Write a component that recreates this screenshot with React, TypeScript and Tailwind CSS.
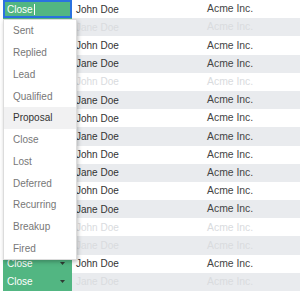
import React from "react";

const rows = [
  { name: "John Doe", faded: false },
  { name: "Jane Doe", faded: true },
  { name: "John Doe", faded: false },
  { name: "Jane Doe", faded: false },
  { name: "John Doe", faded: true },
  { name: "Jane Doe", faded: false },
  { name: "John Doe", faded: false },
  { name: "Jane Doe", faded: false },
  { name: "John Doe", faded: false },
  { name: "Jane Doe", faded: false },
  { name: "John Doe", faded: false },
  { name: "Jane Doe", faded: false },
  { name: "John Doe", faded: true },
  { name: "Jane Doe", faded: true },
  { name: "John Doe", faded: false },
  { name: "Jane Doe", faded: true },
];

const options = [
  "Sent",
  "Replied",
  "Lead",
  "Qualified",
  "Proposal",
  "Close",
  "Lost",
  "Deferred",
  "Recurring",
  "Breakup",
  "Fired",
];

export default function App() {
  return (
    <div className="relative w-[300px] h-[294px] bg-white font-['Liberation_Sans',Arial,sans-serif] text-[10px] overflow-hidden">
      <div className="flex flex-col">
        {rows.map((r, i) => (
          <div key={i} className="flex h-[18.2px] items-stretch">
            <div className="w-[3px] bg-white" />
            <div
              className={`flex flex-1 items-center ${i % 2 === 1 ? "bg-[#e9ebee]" : "bg-white"}`}
            >
              <div className="w-[69px] h-full bg-[#52b682] text-white flex items-center justify-between pl-[4px] pr-[7px]">
                <span>Close</span>
                <svg width="5" height="3" viewBox="0 0 5 3">
                  <path d="M0 0 L5 0 L2.5 3 Z" fill="#2f3a33" />
                </svg>
              </div>
              <div className={`w-[135px] pl-[4px] ${r.faded ? "text-[#d9dbde]" : "text-[#333]"}`}>
                {r.name}
              </div>
              <div className={`text-[10.4px] ${r.faded ? "text-[#d9dbde]" : "text-[#444]"}`}>
                Acme Inc.
              </div>
            </div>
          </div>
        ))}
      </div>

      {/* Editor cell */}
      <div className="absolute left-[3px] top-0 w-[69px] h-[18px] border-2 border-[#2a72e0] bg-[#52b682] text-white flex items-center pl-[2px]">
        <span>Close</span>
        <span className="w-px h-[11px] bg-white ml-px" />
      </div>

      {/* Dropdown */}
      <div className="absolute left-[3px] top-[19px] w-[74px] bg-white border border-[#dcdcdc] shadow-[1px_2px_4px_rgba(0,0,0,0.25)] flex flex-col">
        {options.map((o) => (
          <div
            key={o}
            className={`h-[21.75px] flex items-center pl-[9px] ${o === "Proposal" ? "bg-[#f1f1f2] text-[#333]" : "text-[#777]"}`}
          >
            {o}
          </div>
        ))}
      </div>
    </div>
  );
}
